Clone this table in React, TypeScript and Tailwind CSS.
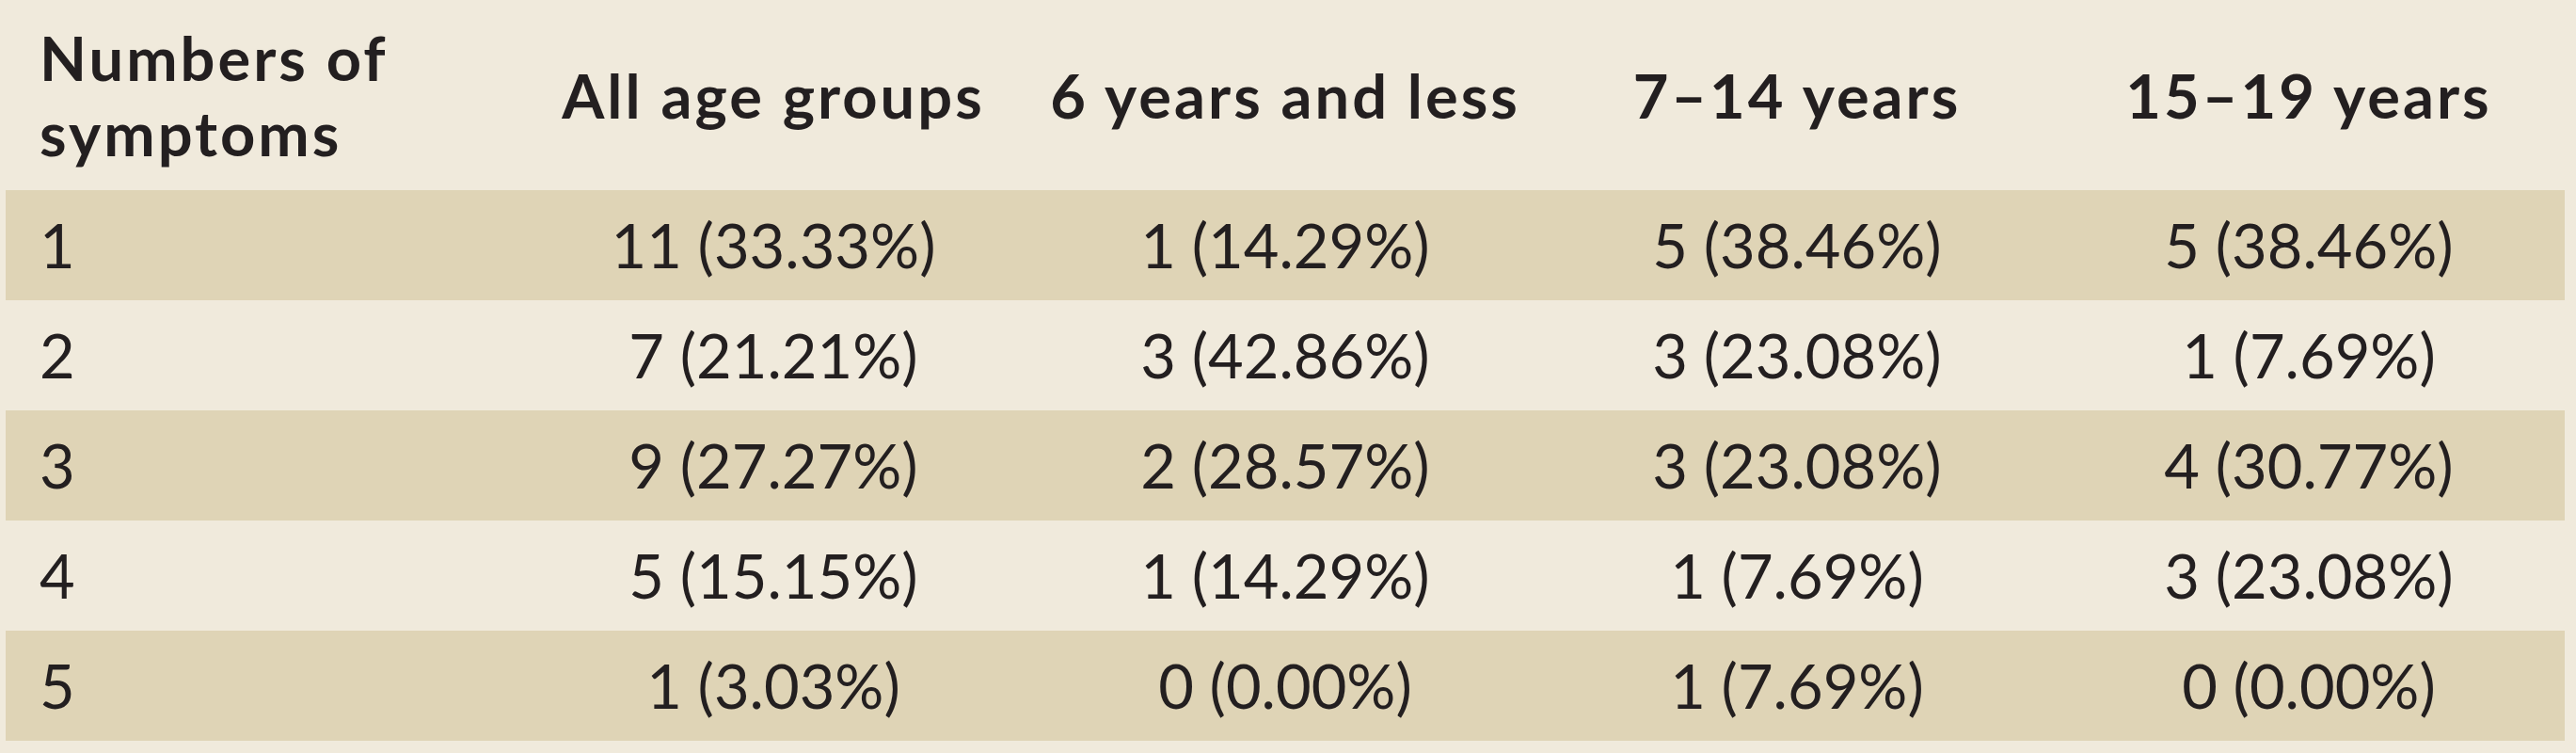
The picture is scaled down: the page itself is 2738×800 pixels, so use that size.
const headers = ["All age groups", "6 years and less", "7–14 years", "15–19 years"];

const rows: string[][] = [
  ["1", "11 (33.33%)", "1 (14.29%)", "5 (38.46%)", "5 (38.46%)"],
  ["2", "7 (21.21%)", "3 (42.86%)", "3 (23.08%)", "1 (7.69%)"],
  ["3", "9 (27.27%)", "2 (28.57%)", "3 (23.08%)", "4 (30.77%)"],
  ["4", "5 (15.15%)", "1 (14.29%)", "1 (7.69%)", "3 (23.08%)"],
  ["5", "1 (3.03%)", "0 (0.00%)", "1 (7.69%)", "0 (0.00%)"],
];

export default function App() {
  return (
    <div
      className="w-[2738px] h-[800px] bg-[#f0eadc] pl-[6px] pr-[12px] text-[#231f20] text-[65px]"
      style={{ fontFamily: "Lato, 'Open Sans', sans-serif" }}
    >
      <div className="grid grid-cols-5 h-[202px] items-center font-bold leading-[80px] tracking-[3px]">
        <div className="pl-[36px]">
          Numbers of
          <br />
          symptoms
        </div>
        {headers.map((h) => (
          <div key={h} className="text-center">
            {h}
          </div>
        ))}
      </div>

      {rows.map((row, i) => (
        <div
          key={row[0]}
          className={
            i % 2 === 0
              ? "grid grid-cols-5 h-[117px] items-center bg-[#dfd4b6]"
              : "grid grid-cols-5 h-[117px] items-center"
          }
        >
          {row.map((cell, j) => (
            <div key={j} className={j === 0 ? "pl-[36px]" : "text-center"}>
              {cell}
            </div>
          ))}
        </div>
      ))}
    </div>
  );
}
